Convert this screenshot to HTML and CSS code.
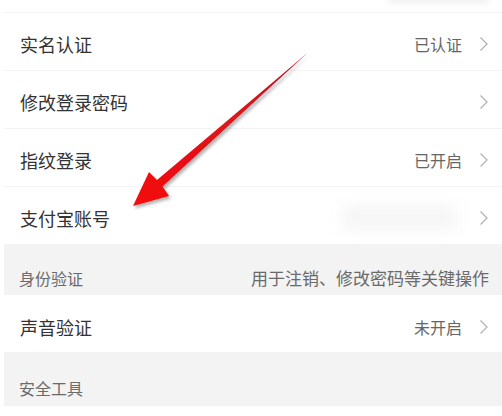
FILE: index.html
```html
<!DOCTYPE html>
<html lang="zh-CN">
<head>
<meta charset="utf-8">
<title>账户安全</title>
<link rel="stylesheet" href="styles.css">
</head>
<body>
<div class="page">
  <div class="top-strip"><span class="blur-top"></span></div>
  <div class="row">
    <span class="title">实名认证</span>
    <span class="right"><span class="value">已认证</span><svg class="chev" viewBox="0 0 10 16" width="10" height="16"><path d="M1.5 1.5 L8 8 L1.5 14.5" fill="none" stroke="#b3b3b3" stroke-width="1.3"/></svg></span>
  </div>
  <div class="row">
    <span class="title">修改登录密码</span>
    <span class="right"><svg class="chev" viewBox="0 0 10 16" width="10" height="16"><path d="M1.5 1.5 L8 8 L1.5 14.5" fill="none" stroke="#b3b3b3" stroke-width="1.3"/></svg></span>
  </div>
  <div class="row">
    <span class="title">指纹登录</span>
    <span class="right"><span class="value">已开启</span><svg class="chev" viewBox="0 0 10 16" width="10" height="16"><path d="M1.5 1.5 L8 8 L1.5 14.5" fill="none" stroke="#b3b3b3" stroke-width="1.3"/></svg></span>
  </div>
  <div class="row last">
    <span class="title">支付宝账号</span>
    <span class="right"><span class="value masked"></span><svg class="chev" viewBox="0 0 10 16" width="10" height="16"><path d="M1.5 1.5 L8 8 L1.5 14.5" fill="none" stroke="#b3b3b3" stroke-width="1.3"/></svg></span>
  </div>
  <div class="section">
    <span class="sec-title">身份验证</span>
    <span class="sec-note">用于注销、修改密码等关键操作</span>
  </div>
  <div class="row last voice">
    <span class="title">声音验证</span>
    <span class="right"><span class="value">未开启</span><svg class="chev" viewBox="0 0 10 16" width="10" height="16"><path d="M1.5 1.5 L8 8 L1.5 14.5" fill="none" stroke="#b3b3b3" stroke-width="1.3"/></svg></span>
  </div>
  <div class="section tools">
    <span class="sec-title">安全工具</span>
  </div>
  <svg class="arrow" viewBox="0 0 502 416" width="502" height="416">
    <defs>
      <linearGradient id="ag" x1="308" y1="53" x2="133" y2="206" gradientUnits="userSpaceOnUse">
        <stop offset="0" stop-color="#b01a2a"/>
        <stop offset="0.35" stop-color="#d8141c"/>
        <stop offset="1" stop-color="#f50d0d"/>
      </linearGradient>
      <filter id="sh" x="-20%" y="-20%" width="140%" height="140%">
        <feDropShadow dx="2" dy="2.5" stdDeviation="1.6" flood-color="#000" flood-opacity="0.3"/>
      </filter>
    </defs>
    <polygon points="133,206 149,172 157,180 308,52.5 162.5,186.5 169,196" fill="url(#ag)" filter="url(#sh)"/>
  </svg>
</div>
</body>
</html>
```

FILE: styles.css
```css
html, body {
  margin: 0;
  padding: 0;
  background: #ffffff;
}

body {
  font-family: "Noto Sans CJK SC", "Noto Sans", sans-serif;
  width: 502px;
  height: 416px;
  overflow: hidden;
}

.page {
  position: relative;
  margin-left: 4px;
  height: 416px;
}

.top-strip {
  height: 12px;
  border-bottom: 1px solid #f3f3f3;
  position: relative;
  overflow: hidden;
}

.blur-top {
  position: absolute;
  left: 385px;
  top: -7px;
  width: 100px;
  height: 10px;
  background: #f0f0f0;
  filter: blur(3px);
}

.row {
  border-bottom: 1px solid #f3f3f3;
  display: flex;
  align-items: center;
  justify-content: space-between;
  padding: 4px 13px 0 16px;
  box-sizing: border-box;
  height: 58px;
}

.row.last {
  border-bottom: none;
  height: 57px;
}

.row.voice {
  padding-top: 6px;
}

.title {
  font-size: 18px;
  color: #333333;
  line-height: 22px;
}

.right {
  display: flex;
  align-items: center;
  gap: 17px;
}

.value {
  font-size: 16px;
  color: #666666;
  line-height: 20px;
}

.value.masked {
  width: 115px;
  height: 26px;
  background: #f6f6f6;
  filter: blur(7px);
  margin-right: 5px;
}

.chev {
  display: block;
  margin-top: 1px;
}

.section {
  background: #f3f3f3;
  height: 51px;
  box-sizing: border-box;
  padding: 24px 13px 0 15px;
  display: flex;
  justify-content: space-between;
  align-items: flex-start;
}

.sec-title {
  font-size: 16px;
  color: #6a6a6a;
  line-height: 20px;
}

.sec-note {
  font-size: 17px;
  color: #6a6a6a;
  line-height: 20px;
}

.section.tools {
  height: 54px;
  padding-top: 26px;
}

.arrow {
  position: absolute;
  left: -4px;
  top: 0;
  pointer-events: none;
}
```
